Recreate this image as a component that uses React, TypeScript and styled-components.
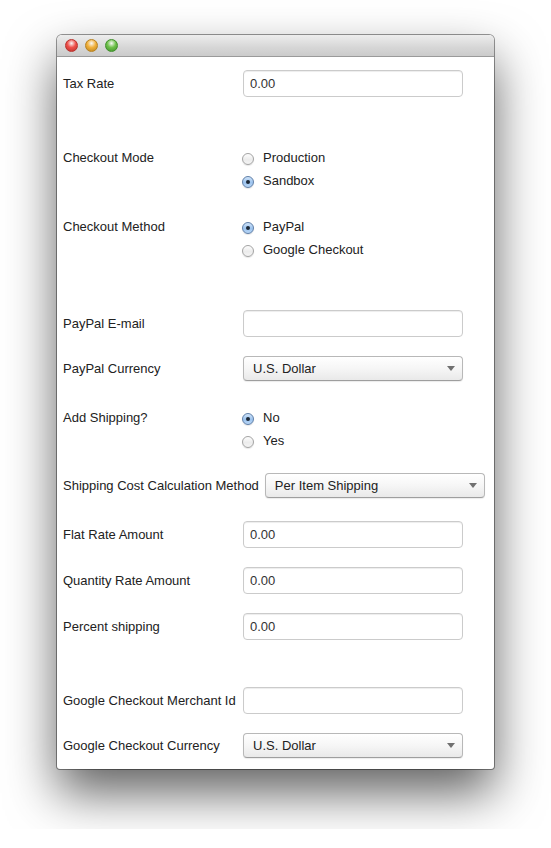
import React from 'react';
import styled, { createGlobalStyle } from 'styled-components';

const Global = createGlobalStyle`
  html, body { margin: 0; padding: 0; background: #fff; }
  body { font-family: "Liberation Sans", Arial, Helvetica, sans-serif; }
`;

const Page = styled.div`
  padding: 35px 0 60px 57px;
`;

const Window = styled.div`
  width: 437px;
  border-radius: 5px 5px 3px 3px;
  background: #fff;
  box-shadow: 0 0 0 1px rgba(0, 0, 0, 0.4), 0 24px 50px rgba(0, 0, 0, 0.62);
  overflow: hidden;
`;

const TitleBar = styled.div`
  height: 22px;
  box-sizing: border-box;
  border-bottom: 1px solid #9a9a9a;
  background: linear-gradient(#ededed, #d6d6d6 60%, #cbcbcb);
  display: flex;
  align-items: center;
  padding-left: 8px;
  gap: 7px;
`;

const Light = styled.span<{ $c: string; $d: string }>`
  width: 13px;
  height: 13px;
  border-radius: 50%;
  box-sizing: border-box;
  border: 1px solid ${(p) => p.$d};
  background: radial-gradient(circle at 50% 30%, #ffffffcc 0, ${(p) => p.$c} 45%, ${(p) => p.$d} 100%);
`;

const Content = styled.div`
  padding: 13px 6px 11px;
  display: flex;
  flex-direction: column;
`;

const Row = styled.div<{ $mt: number }>`
  display: flex;
  align-items: flex-start;
  margin-top: ${(p) => p.$mt}px;
`;

const Label = styled.label<{ $lh: number }>`
  min-width: 174px;
  padding-right: 6px;
  flex-shrink: 0;
  white-space: nowrap;
  font-size: 13px;
  color: #222;
  line-height: ${(p) => p.$lh}px;
`;

const TextInput = styled.input`
  width: 220px;
  height: 27px;
  box-sizing: border-box;
  margin: 0;
  border: 1px solid #cbcbcb;
  border-radius: 4px;
  padding: 0 6px;
  font-family: inherit;
  font-size: 13px;
  color: #333;
  background: #fff;
  box-shadow: inset 0 1px 1px rgba(0, 0, 0, 0.075);
  outline: none;
`;

const SelectBox = styled.div`
  width: 220px;
  height: 25px;
  box-sizing: border-box;
  display: flex;
  align-items: center;
  justify-content: space-between;
  padding: 0 7px 0 9px;
  border: 1px solid #b8b8b8;
  border-bottom-color: #9e9e9e;
  border-radius: 4px;
  background: linear-gradient(#ffffff, #f6f6f6 50%, #e9e9e9);
  box-shadow: 0 1px 1px rgba(0, 0, 0, 0.08);
  font-size: 13px;
  color: #222;
`;

const RadioGroup = styled.div`
  display: flex;
  flex-direction: column;
`;

const RadioItem = styled.div`
  display: flex;
  align-items: flex-start;
  height: 23px;
  line-height: 23px;
  font-size: 13px;
  color: #222;
`;

const RadioDot = styled.span<{ $on: boolean }>`
  position: relative;
  width: 12px;
  height: 12px;
  box-sizing: border-box;
  margin: 7px 9px 0 -1px;
  border-radius: 50%;
  border: 1px solid ${(p) => (p.$on ? '#5f7fa8' : '#a3a3a3')};
  background: ${(p) =>
    p.$on
      ? 'linear-gradient(#cfe3f9, #9cc3ee 55%, #b9d6f6)'
      : 'linear-gradient(#fdfdfd, #ececec 55%, #f4f4f4)'};
  box-shadow: 0 1px 1px rgba(0, 0, 0, 0.1);
  &::after {
    content: '';
    display: ${(p) => (p.$on ? 'block' : 'none')};
    position: absolute;
    left: 3px;
    top: 3px;
    width: 4px;
    height: 4px;
    border-radius: 50%;
    background: #1c2736;
  }
`;

const Arrow = () => (
  <svg width="8" height="5" viewBox="0 0 8 5">
    <path d="M0 0h8L4 5z" fill="#707070" />
  </svg>
);

const Select = ({ value }: { value: string }) => (
  <SelectBox>
    <span>{value}</span>
    <Arrow />
  </SelectBox>
);

const Radios = ({ items, checked }: { items: string[]; checked: number }) => (
  <RadioGroup>
    {items.map((t, i) => (
      <RadioItem key={t}>
        <RadioDot $on={i === checked} />
        {t}
      </RadioItem>
    ))}
  </RadioGroup>
);

export default function App() {
  return (
    <>
      <Global />
      <Page>
        <Window>
          <TitleBar>
            <Light $c="#f0504a" $d="#b8312c" />
            <Light $c="#f2b13a" $d="#b7811f" />
            <Light $c="#6fc24a" $d="#3f8f2b" />
          </TitleBar>
          <Content>
            <Row $mt={0}>
              <Label $lh={27}>Tax Rate</Label>
              <TextInput defaultValue="0.00" />
            </Row>
            <Row $mt={49}>
              <Label $lh={23}>Checkout Mode</Label>
              <Radios items={['Production', 'Sandbox']} checked={1} />
            </Row>
            <Row $mt={23}>
              <Label $lh={23}>Checkout Method</Label>
              <Radios items={['PayPal', 'Google Checkout']} checked={0} />
            </Row>
            <Row $mt={49}>
              <Label $lh={27}>PayPal E-mail</Label>
              <TextInput defaultValue="" />
            </Row>
            <Row $mt={19}>
              <Label $lh={25}>PayPal Currency</Label>
              <Select value="U.S. Dollar" />
            </Row>
            <Row $mt={25}>
              <Label $lh={23}>Add Shipping?</Label>
              <Radios items={['No', 'Yes']} checked={0} />
            </Row>
            <Row $mt={21}>
              <Label $lh={25}>Shipping Cost Calculation Method</Label>
              <Select value="Per Item Shipping" />
            </Row>
            <Row $mt={23}>
              <Label $lh={27}>Flat Rate Amount</Label>
              <TextInput defaultValue="0.00" />
            </Row>
            <Row $mt={19}>
              <Label $lh={27}>Quantity Rate Amount</Label>
              <TextInput defaultValue="0.00" />
            </Row>
            <Row $mt={19}>
              <Label $lh={27}>Percent shipping</Label>
              <TextInput defaultValue="0.00" />
            </Row>
            <Row $mt={47}>
              <Label $lh={27}>Google Checkout Merchant Id</Label>
              <TextInput defaultValue="" />
            </Row>
            <Row $mt={19}>
              <Label $lh={25}>Google Checkout Currency</Label>
              <Select value="U.S. Dollar" />
            </Row>
          </Content>
        </Window>
      </Page>
    </>
  );
}
